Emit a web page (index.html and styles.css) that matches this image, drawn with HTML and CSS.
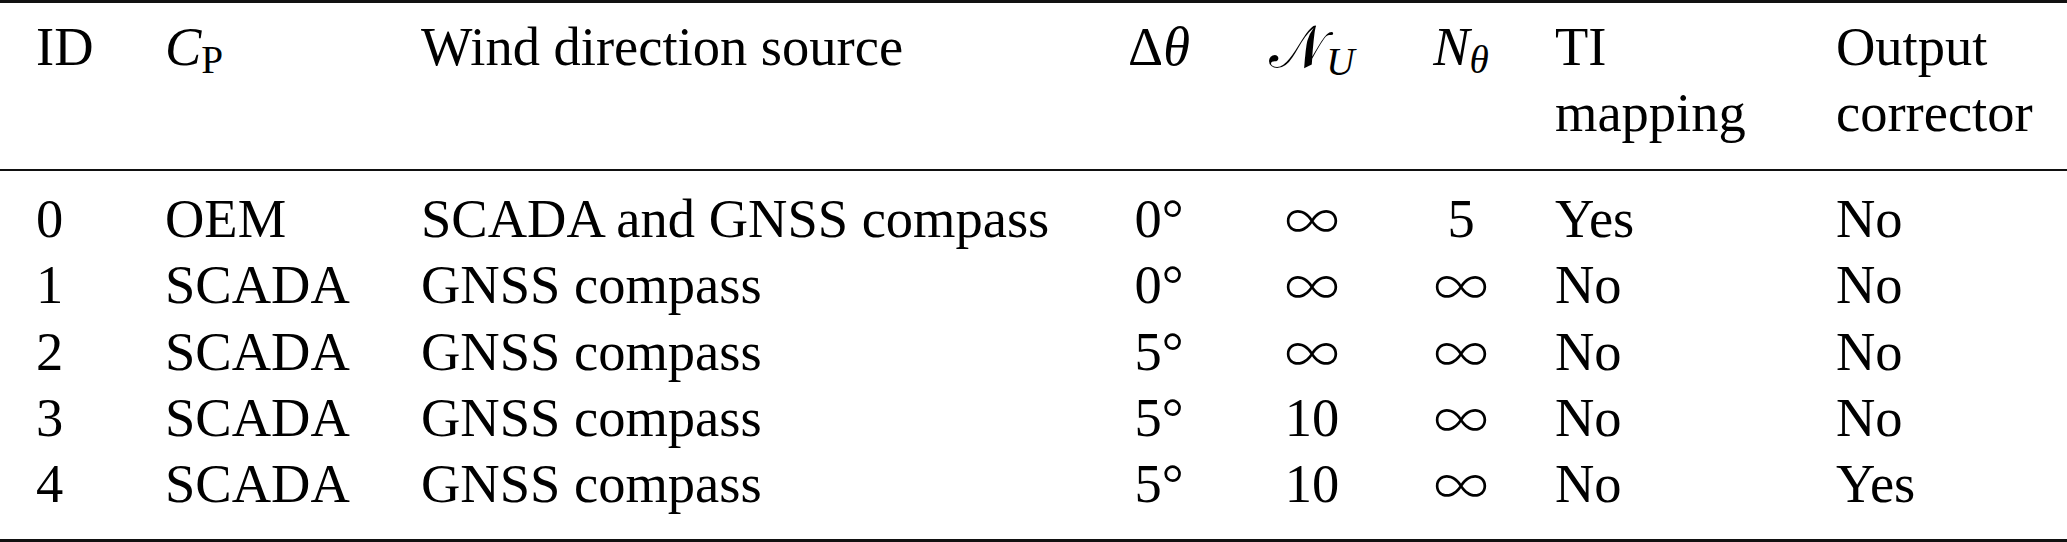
FILE: index.html
```html
<!DOCTYPE html>
<html lang="en">
<head>
<meta charset="utf-8">
<title>Table</title>
<link rel="stylesheet" href="styles.css">
</head>
<body>
<div class="table">
  <div class="rule rule-top"></div>
  <div class="grid head">
    <div>ID</div>
    <div><span class="it">C</span><sub class="sub-up">P</sub></div>
    <div>Wind direction source</div>
    <div class="ctr">Δ<span class="it">θ</span></div>
    <div class="ctr"><span class="cal">𝒩</span><sub class="sub-it">U</sub></div>
    <div class="ctr"><span class="it">N</span><sub class="sub-it">θ</sub></div>
    <div class="ti">TI<br>mapping</div>
    <div>Output<br>corrector</div>
  </div>
  <div class="rule rule-mid"></div>
  <div class="grid body">
    <div>0</div><div>OEM</div><div>SCADA and GNSS compass</div><div class="ctr">0°</div><div class="ctr"><span class="inf">∞</span></div><div class="ctr">5</div><div class="ti">Yes</div><div>No</div>
    <div>1</div><div>SCADA</div><div>GNSS compass</div><div class="ctr">0°</div><div class="ctr"><span class="inf">∞</span></div><div class="ctr"><span class="inf">∞</span></div><div class="ti">No</div><div>No</div>
    <div>2</div><div>SCADA</div><div>GNSS compass</div><div class="ctr">5°</div><div class="ctr"><span class="inf">∞</span></div><div class="ctr"><span class="inf">∞</span></div><div class="ti">No</div><div>No</div>
    <div>3</div><div>SCADA</div><div>GNSS compass</div><div class="ctr">5°</div><div class="ctr">10</div><div class="ctr"><span class="inf">∞</span></div><div class="ti">No</div><div>No</div>
    <div>4</div><div>SCADA</div><div>GNSS compass</div><div class="ctr">5°</div><div class="ctr">10</div><div class="ctr"><span class="inf">∞</span></div><div class="ti">No</div><div>Yes</div>
  </div>
  <div class="rule rule-bottom"></div>
</div>
</body>
</html>
```

FILE: styles.css
```css
html, body {
  margin: 0;
  padding: 0;
  background: #ffffff;
}

body {
  color: #000000;
  font-family: "Liberation Serif", "Times New Roman", serif;
  font-size: 54.5px;
  line-height: 66px;
}

.table {
  width: 2067px;
}

.rule {
  background: #111111;
}

.rule-top {
  height: 3px;
}

.rule-mid {
  height: 2px;
}

.rule-bottom {
  height: 3px;
}

.grid {
  display: grid;
  grid-template-columns: 129px 256px 679px 118px 188px 110px 320px 1fr;
  align-items: start;
  padding-left: 36px;
}

.head {
  padding-top: 11px;
  padding-bottom: 23px;
}

.body {
  padding-top: 15px;
  padding-bottom: 22px;
  line-height: 66.25px;
  grid-auto-rows: 66.25px;
}

.ctr {
  text-align: center;
}

.ti {
  padding-left: 39px;
}

.it {
  font-style: italic;
}

.cal {
  font-family: "DejaVu Serif", "DejaVu Sans", serif;
  font-style: normal;
  font-size: 1.08em;
}

.inf {
  font-family: "Noto Sans CJK JP", sans-serif;
  font-weight: 300;
  font-size: 1em;
  line-height: 1;
  vertical-align: -0.08em;
}

sub {
  font-size: 0.72em;
  line-height: 0;
  vertical-align: -0.2em;
}

.sub-up {
  font-style: normal;
}

.sub-it {
  font-style: italic;
}
```
